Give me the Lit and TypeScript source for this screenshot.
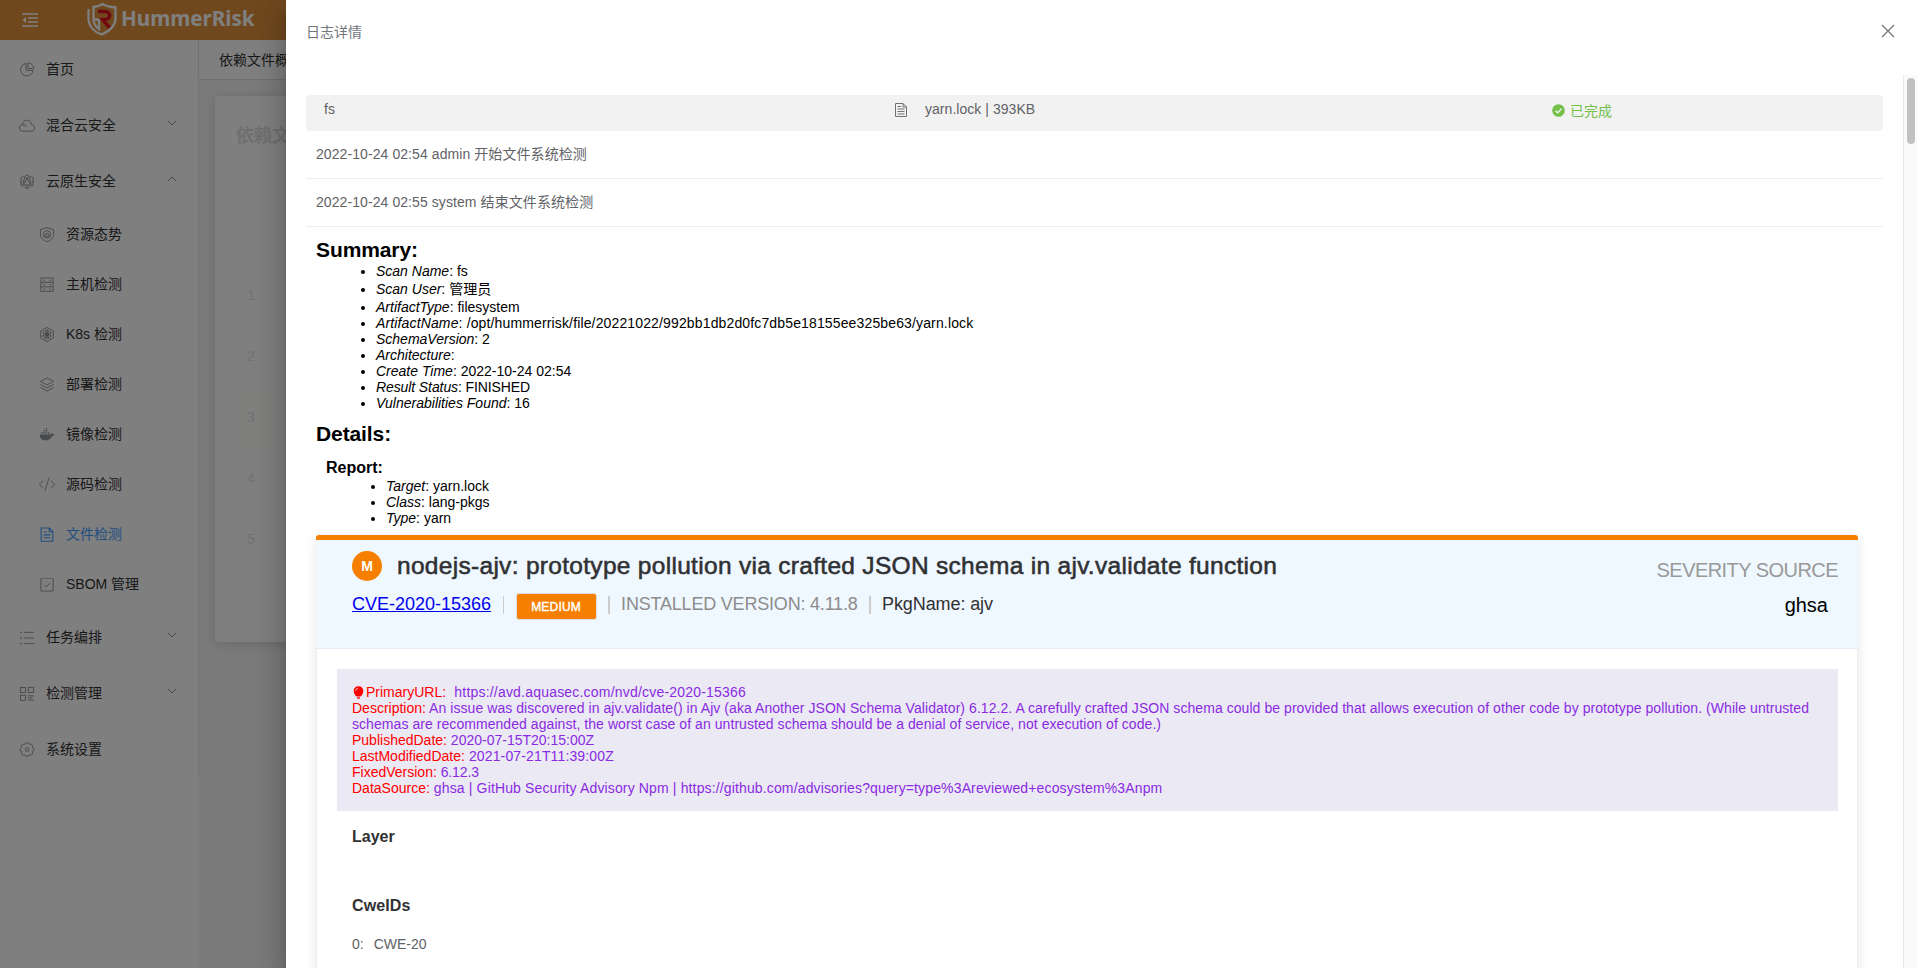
import { LitElement, html, css, svg } from "lit";
import { customElement } from "lit/decorators.js";

const icon = (body: unknown, cls = "ic") => html`<svg class=${cls} viewBox="0 0 16 16" fill="none" stroke="currentColor" stroke-width="1">${body}</svg>`;

const icons: Record<string, unknown> = {
  pie: svg`<path d="M7 1.500A6.700 6.700 0 1 0 14.500 9H7Z"/><path d="M9 .8A6.300 6.300 0 0 1 15.200 7H9Z"/>`,
  cloud: svg`<path d="M3.500 14C-1.200 14-1.200 7.600 3.200 7.200C3.500.800 12 .600 12.700 7C17.200 7.600 17.200 14 12.800 14Z"/><path d="M3.500 7.300C5.800 7.300 7 8.200 7.200 9.500"/>`,
  native: svg`<path d="M8 .8 10.500 2.800 8 4.600 5.500 2.800ZM8 4.600 12 11.800H4ZM5.500 3.500 3.500 11.500M10.500 3.500 12.500 11.500M8 11.800V15.500"/><path d="M4.500 2.500 1.500 4V12L4 13.300M11.500 2.500 14.500 4V12L12 13.300M5.200 13.900 8 15.500 10.800 13.900M.8 8.500H2.500M13.500 8.500H15.200"/>`,
  shield: svg`<path d="M8 .6 15 2.800V8C15 11.700 11.700 14.200 8 15.600C4.300 14.200 1 11.700 1 8V2.800Z"/><circle cx="8" cy="7.800" r="3.900"/><path d="M5.300 9.500H10.700M6 9.300V8.200C6 6.200 10 6.200 10 8.200V9.300"/>`,
  host: svg`<rect x="1.500" y="1" width="13" height="14.200"/><path d="M1.500 5.700H14.500M1.500 10.500H14.500M4 3.400H6M4 8.100H6M4 12.800H6M10.500 3.400H12.500M10.500 8.100H12.500M10.500 12.800H12.500"/>`,
  k8s: svg`<path d="M8 .5 14.800 4.200V11.800L8 15.500 1.200 11.800V4.200Z"/><path d="M8 3.500 11.800 5.600V10.400L8 12.500 4.200 10.400V5.600Z" stroke-width="1.600" stroke-dasharray="2.500 1"/><circle cx="8" cy="8" r="2.200" fill="currentColor"/>`,
  layers: svg`<path d="M8 1 15 4.700 8 8.400 1 4.700ZM1 8 8 11.700 15 8M1 11.300 8 15 15 11.300"/>`,
  docker: svg`<path fill="currentColor" stroke="none" d="M.3 8H12.200C12.300 7 12.600 6.500 13.300 6.300C13.900 6.700 14.200 7.200 14.400 7.600H16C15.600 8.700 14.700 9.200 13.500 9.200C12.200 12.500 9.700 14.200 6 14.200C2.500 14.200.4 12.500.3 8ZM1.800 5.500H3.400V7.100H1.800ZM4.200 5.500H5.800V7.100H4.200ZM6.600 5.500H8.200V7.100H6.600ZM9 5.500H10.600V7.100H9ZM4.200 3.200H5.800V4.800H4.200ZM6.600 3.200H8.200V4.800H6.600ZM6.600 1H8.200V2.600H6.600Z"/>`,
  code: svg`<path d="M3.800 4 -.3 8 3.800 12M12.200 4 16.300 8 12.200 12M10.300.8 5.700 15.200"/>`,
  file: svg`<path d="M1.800 1H10.500L14.200 4.700V15.200H1.800ZM10.300 1V5H14.200M4.500 5.300H8M4.500 8.400H11.500M4.500 11.500H11.500" stroke-width="1.200"/>`,
  sbom: svg`<path d="M2.800 1.800H1.500V15H14.500V1.800H13.200M5.500 1.500H6.800M9.200 1.500H10.500M4.200.8V2.300M8 .8V2.300M11.800.8V2.300"/><path d="M5 8.300 7.200 10.500 11 6.500"/>`,
  list: svg`<path d="M5 2.500H15.500M5 8.500H15.500M5 14.500H15.500" /><path d="M.8 2.500H2.500M.8 8.500H2.500M.8 14.500H2.500" stroke-width="1.500"/>`,
  grid: svg`<rect x="1" y="1.500" width="5.500" height="5.500"/><rect x="9.500" y="1.500" width="5.500" height="5.500"/><rect x="1" y="9.800" width="5.500" height="5.500"/><path d="M9 10.500H15.500M9 12.700H13.500M9 15H15.500"/>`,
  gear: svg`<path d="M6.300 1H9.700L10.600 2.600 12.600 2.200 14.400 4.300 13.700 6.100 15.300 7.200V9.400L13.700 10.300 14.300 12.200 12.300 14.100 10.500 13.500 9.500 15.200H6.500L5.500 13.500 3.700 14.100 1.700 12.200 2.300 10.300.7 9.400V7.200L2.300 6.100 1.600 4.300 3.400 2.200 5.400 2.600Z"/><circle cx="8" cy="8.200" r="1.900"/>`,
};

const menu: [string, string, string, string][] = [
  ["pie", "首页", "", "top"], ["cloud", "混合云安全", "down", "top"], ["native", "云原生安全", "up", "top"],
  ["shield", "资源态势", "", "sub"], ["host", "主机检测", "", "sub"], ["k8s", "K8s 检测", "", "sub"],
  ["layers", "部署检测", "", "sub"], ["docker", "镜像检测", "", "sub"], ["code", "源码检测", "", "sub"],
  ["file", "文件检测", "", "sub on"], ["sbom", "SBOM 管理", "", "sub"],
  ["list", "任务编排", "down", "top"], ["grid", "检测管理", "down", "top"], ["gear", "系统设置", "", "top"],
];

const summary: [string, string, string?][] = [
  ["Scan Name", "fs"], ["Scan User", "管理员", "wide"], ["ArtifactType", "filesystem"],
  ["ArtifactName", "/opt/hummerrisk/file/20221022/992bb1db2d0fc7db5e18155ee325be63/yarn.lock", "ls14"],
  ["SchemaVersion", "2"], ["Architecture", ""], ["Create Time", "2022-10-24 02:54"],
  ["Result Status", "FINISHED", "lsn"], ["Vulnerabilities Found", "16"],
];

const report: [string, string, string?][] = [["Target", "yarn.lock"], ["Class", "lang-pkgs"], ["Type", "yarn"]];

const facts: [string, string, string][] = [
  ["Description:", "An issue was discovered in ajv.validate() in Ajv (aka Another JSON Schema Validator) 6.12.2. A carefully crafted JSON schema could be provided that allows execution of other code by prototype pollution. (While untrusted schemas are recommended against, the worst case of an untrusted schema should be a denial of service, not execution of code.)", "ls06"],
  ["PublishedDate:", "2020-07-15T20:15:00Z", ""],
  ["LastModifiedDate:", "2021-07-21T11:39:00Z", "ls14"],
  ["FixedVersion:", "6.12.3", "lsn"],
  ["DataSource:", "ghsa | GitHub Security Advisory Npm | https://github.com/advisories?query=type%3Areviewed+ecosystem%3Anpm", "ls14"],
];

@customElement("app-root")
export class AppRoot extends LitElement {
  static styles = css`
    :host { display: block; position: relative; width: 100%; height: 968px; overflow: hidden; background: #f5f5f5;
      font-family: "Liberation Sans", "Noto Sans CJK SC", sans-serif; font-size: 14px; color: #303133; }
    * { box-sizing: border-box; }
    svg { display: block; flex: none; overflow: visible; }
    .head { height: 40px; background: #e0913c; display: flex; align-items: center; padding-left: 22px; color: #fff; }
    .fold { width: 16px; height: 14px; }
    .logo { width: 32px; height: 34px; margin-left: 48px; margin-top: -3px; }
    .brand { font: bold 20.6px/36px "Noto Sans", sans-serif; margin-left: 3px; margin-top: -4px; white-space: nowrap; }
    .page { display: flex; height: 928px; }
    .side { width: 199px; background: #fff; }
    .menu { height: 736px; border-right: 1px solid #e6e6e6; padding-top: 1px; }
    .item { display: flex; align-items: center; padding-left: 18px; }
    .top { height: 56px; }
    .sub { height: 50px; padding-left: 38px; }
    .on { color: #409eff; }
    .ic { width: 18px; height: 15px; color: #909399; }
    .on .ic { color: #409eff; }
    .label { margin-left: 10px; line-height: 20px; white-space: nowrap; }
    .arrow { width: 10px; height: 6px; margin: -5px 21px 0 auto; color: #909399; }
    .main { flex: 1; }
    .tabs { height: 40px; background: #fff; border-bottom: 1px solid #d8dce5; padding: 10px 20px; line-height: 20px; white-space: nowrap; }
    .card { margin: 16px 16px 0; height: 546px; background: #fff; border-radius: 4px; box-shadow: 0 2px 12px rgba(0,0,0,.15); padding: 25px 21px; color: #dedede; }
    .ctitle { font-size: 18px; font-weight: bold; line-height: 30px; white-space: nowrap; }
    .nums { padding: 113px 0 0; }
    .num { height: 61px; width: 36px; padding: 22px 6px 0 0; text-align: center; border-top: 1px solid #f9f9f9; line-height: 16px; color: #e4e4e4; }
    .num.hl { background: #fefefa; }
    .mask { position: absolute; inset: 0; background: rgba(0,0,0,.5); }
    .drawer { position: absolute; top: 0; right: 0; bottom: 0; width: 1631px; background: #fff; display: flex; flex-direction: column;
      box-shadow: 0 8px 10px -5px rgba(0,0,0,.2), 0 16px 24px 2px rgba(0,0,0,.14), 0 6px 30px 5px rgba(0,0,0,.12); }
    .dhead { height: 75px; display: flex; justify-content: space-between; padding: 22px 22px 0 20px; color: #72767b; line-height: 20px; flex: none; }
    .close { width: 14px; height: 14px; margin-top: 2px; }
    .dbody { flex: 1; min-height: 0; display: flex; }
    .content { flex: 1; padding: 20px 20px 0; overflow: hidden; }
    .bar { width: 14px; border-left: 1px solid #e8e8e8; background: #fafafa; padding: 3px 0 0 3px; flex: none; }
    .thumb { width: 8px; height: 66px; border-radius: 4px; background: #c1c1c1; }
    .info { height: 36px; border-radius: 4px; background: #f2f2f2; display: grid; grid-template-columns: 589px 657px 1fr; color: #606266; line-height: 16px; width: 1577px; }
    .c1 { padding: 6px 0 0 18px; }
    .c2 { display: flex; padding: 6px 0 0; letter-spacing: .04px; }
    .doc { width: 12px; height: 14px; margin-top: 2px; margin-right: 18px; }
    .c3 { display: flex; color: #74c04a; padding: 6px 0 0; line-height: 20px; }
    .ok { width: 13px; height: 13px; margin: 3px 5px 0 0; }
    .log { width: 1577px; height: 48px; border-bottom: 1px solid #ebeef5; padding: 13px 10px 0; line-height: 20px; color: #606266; letter-spacing: .08px; }
    .sum { padding: 10px 24px 0 10px; color: #000; }
    h2 { margin: 0 0 1px; font-size: 21px; line-height: 25px; letter-spacing: -.1px; }
    h3 { margin: 0; font-size: 16px; line-height: 20px; }
    ul { margin: 0; padding: 0 0 0 60px; line-height: 16px; }
    .wide { line-height: 20px; }
    .ls14 { letter-spacing: .14px; }
    .ls06 { letter-spacing: .06px; }
    .lsn { letter-spacing: -.1px; }
    .ls20 { letter-spacing: .2px; }
    .details { margin: 10px 0 0; }
    .report { padding: 12px 0 0 10px; }
    .vuln { margin-top: 9px; height: 500px; border: 1px solid #ebeef5; border-top: 0; border-radius: 4px; box-shadow: 0 2px 12px rgba(0,0,0,.1); background: #fff; width: 1542px; }
    .vhead { height: 114px; margin: 0 -1px; border-top: 5px solid #f77f00; border-radius: 3px 3px 0 0; background: #eff7ff; border-bottom: 1px solid #e6ebf5; padding: 11px 20px 0 36px; display: flex; justify-content: space-between; }
    .vtitle { display: flex; align-items: center; height: 30px; color: #303133; white-space: nowrap; }
    .tt { font-size: 24.5px; letter-spacing: .3px; -webkit-text-stroke: .55px #303133; margin-top: -1px; }
    .badge { width: 30px; height: 30px; border-radius: 50%; background: #f77f00; color: #fff; font-size: 14px; font-weight: bold; line-height: 30px; text-align: center; margin-right: 15px; }
    .meta { display: flex; height: 26px; align-items: center; margin-top: 12px; font-size: 18px; color: #8c8c8c; white-space: nowrap; }
    .meta a { color: #0000ee; text-decoration: underline; margin-top: -3px; }
    .sep { width: 1.5px; height: 18px; background: #ccc; margin: -3px 11.5px 0; }
    .chip { background: #f77f00; color: #fff; width: 81px; height: 27px; border: 1px solid #ddd; border-radius: 3px; font-size: 12px; -webkit-text-stroke: .4px #fff; letter-spacing: .2px; text-align: center; line-height: 26px; }
    .t { margin-top: -3px; letter-spacing: -.2px; }
    .dark { color: #303133; letter-spacing: -.1px; }
    .src { text-align: right; font-size: 20px; color: #999; line-height: 24px; padding-top: 7px; white-space: nowrap; }
    .sev { letter-spacing: -.55px; }
    .src .v { color: #000; padding: 11px 10px 0 0; }
    .box { margin: 20px 19px 0 20px; height: 142px; background: #ebe9f4; padding: 15px; color: #8a2be2; line-height: 16px; }
    .first { display: flex; height: 16px; align-items: center; white-space: pre; }
    .k { color: #f00; letter-spacing: 0; }
    .bulb { width: 13px; height: 13px; margin-right: 1px; }
    h4 { margin: 16px 0 0 35px; font-size: 16px; line-height: 20px; color: #303133; }
    .h4b { margin-top: 49px; letter-spacing: .1px; }
    .cwe { margin: 18px 0 0 35px; line-height: 20px; color: #606266; display: flex; gap: 10px; }
  `;

  private list(rows: [string, string, string?][]) {
    return html`<ul>${rows.map(([k, v, c]) => html`<li class=${c ?? ""}><i>${k}</i>: ${v}</li>`)}</ul>`;
  }

  render() {
    return html`
      <div class="head">
        <svg class="fold" viewBox="0 0 16 14" fill="none" stroke="#fff" stroke-width="1.500"><path d="M0 1H16M6 5H16M6 9H16M0 13H16"/><path d="M.5 7 4 4V10Z" fill="#fff" stroke="none"/></svg>
        <svg class="logo" viewBox="0 0 32 34" fill="none"><path d="M2.500 7V17.500C3 24.500 8.500 30 15.500 32.500C24 29 29.500 24 29.500 16V5.500C24 5 20 4 16.500 2C13.500 4 10.500 5 7.500 5V17.500C7.500 22 9.500 24.500 13 27V17.500H7.500" stroke="#fff" stroke-width="2.300"/><path d="M12 9.500H19C25.500 9.500 25.500 17.500 18 17.500H16.500L23.500 25.500" stroke="#e01020" stroke-width="3.500"/></svg>
        <span class="brand">HummerRisk</span>
      </div>
      <div class="page">
        <div class="side"><div class="menu">
          ${menu.map(([i, l, a, c]) => html`<div class="item ${c}">${icon(icons[i])}<span class="label">${l}</span>
            ${a ? html`<svg class="arrow" viewBox="0 0 10 6" fill="none" stroke="currentColor"><path d=${a === "down" ? "M.7.7 5 5 9.300.7" : "M.7 5.300 5 1 9.300 5.300"}/></svg>` : ""}</div>`)}
        </div></div>
        <div class="main">
          <div class="tabs">依赖文件概览</div>
          <div class="card"><div class="ctitle">依赖文件概览</div>
            <div class="nums">${[1, 2, 3, 4, 5].map((n) => html`<div class="num ${n === 3 ? "hl" : ""}">${n}</div>`)}</div>
          </div>
        </div>
      </div>
      <div class="mask"></div>
      <div class="drawer">
        <div class="dhead"><span>日志详情</span>
          <svg class="close" viewBox="0 0 14 14" fill="none" stroke="#72767b" stroke-width="1.300"><path d="M1 1 13 13M13 1 1 13"/></svg></div>
        <div class="dbody">
          <div class="content">
            <div class="info">
              <div class="c1">fs</div>
              <div class="c2"><svg class="doc" viewBox="0 0 12 14" fill="none" stroke="#707276"><path d="M.5.5H8L11.500 4V13.500H.5ZM8 .5V4H11.500M2.500 3.500H6M2.500 6H9.500M2.500 8.500H9.500M2.500 11H9.500"/></svg><span>yarn.lock | 393KB</span></div>
              <div class="c3"><svg class="ok" viewBox="0 0 13 13"><circle cx="6.500" cy="6.500" r="6.300" fill="#74c04a"/><path d="M3.500 6.700 5.700 8.800 9.500 4.700" fill="none" stroke="#fff" stroke-width="1.200"/></svg><span>已完成</span></div>
            </div>
            <div class="log">2022-10-24 02:54 admin 开始文件系统检测</div>
            <div class="log">2022-10-24 02:55 system 结束文件系统检测</div>
            <div class="sum">
              <h2>Summary:</h2>
              ${this.list(summary)}
              <h2 class="details">Details:</h2>
              <div class="report"><h3>Report:</h3>${this.list(report)}</div>
              <div class="vuln">
                <div class="vhead">
                  <div>
                    <div class="vtitle"><span class="badge">M</span><span class="tt">nodejs-ajv: prototype pollution via crafted JSON schema in ajv.validate function</span></div>
                    <div class="meta"><a>CVE-2020-15366</a><span class="sep"></span><span class="chip">MEDIUM</span><span class="sep"></span><span class="t">INSTALLED VERSION: 4.11.8</span><span class="sep"></span><span class="t dark">PkgName: ajv</span></div>
                  </div>
                  <div class="src"><div class="sev">SEVERITY SOURCE</div><div class="v">ghsa</div></div>
                </div>
                <div class="box">
                  <div class="first"><svg class="bulb" viewBox="0 0 13 13"><path d="M6.500.3C12.500.3 12.500 7.500 8.500 10.500H4.500C.5 7.500.5.3 6.500.3Z" fill="#f00"/><path d="M5 12H8" stroke="#f00" stroke-width="1.300"/><path d="M3.700 5C3.700 3.500 4.500 2.500 6 2.200" stroke="#fff" fill="none" stroke-width=".7"/></svg><span class="k">PrimaryURL:</span><span class="ls20">  https://avd.aquasec.com/nvd/cve-2020-15366</span></div>
                  ${facts.map(([k, v, c]) => html`<div class=${c}><span class="k">${k}</span> ${v}</div>`)}
                </div>
                <h4>Layer</h4>
                <h4 class="h4b">CweIDs</h4>
                <div class="cwe"><span>0:</span><span>CWE-20</span></div>
              </div>
            </div>
          </div>
          <div class="bar"><div class="thumb"></div></div>
        </div>
      </div>`;
  }
}
